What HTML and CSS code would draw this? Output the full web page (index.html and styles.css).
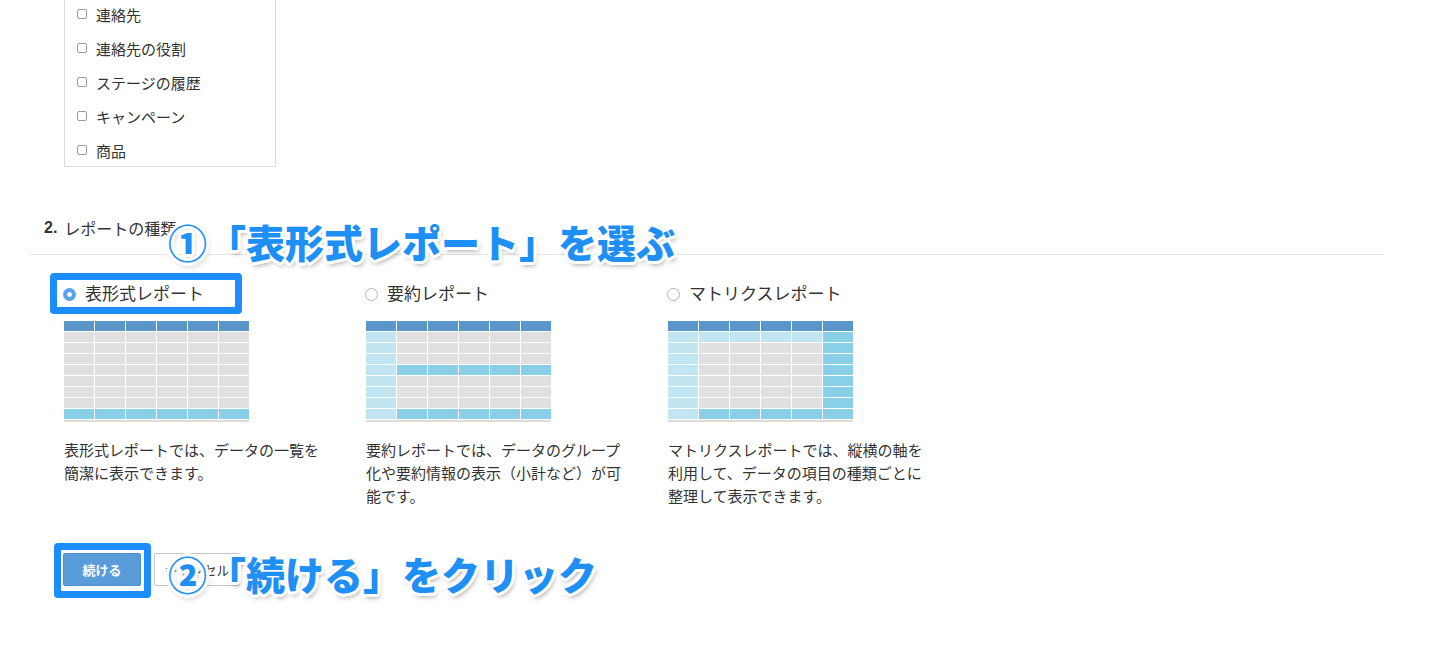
FILE: index.html
```html
<!DOCTYPE html>
<html lang="ja">
<head>
<meta charset="utf-8">
<title>レポートの種類</title>
<link rel="stylesheet" href="styles.css">
</head>
<body>
<div class="page">
  <div class="objects">
    <ul class="obj-list">
      <li class="obj-item"><span class="check"></span><span>連絡先</span></li>
      <li class="obj-item"><span class="check"></span><span>連絡先の役割</span></li>
      <li class="obj-item"><span class="check"></span><span>ステージの履歴</span></li>
      <li class="obj-item"><span class="check"></span><span>キャンペーン</span></li>
      <li class="obj-item"><span class="check"></span><span>商品</span></li>
    </ul>
  </div>

  <section class="types">
    <h2 class="types-title"><span class="num">2.</span><span>レポートの種類</span></h2>
    <div class="options">
      <div class="option">
        <div class="opt-label"><span class="radio on"></span><span>表形式レポート</span></div>
        <div class="mini">
          <i class="h"></i><i class="h"></i><i class="h"></i><i class="h"></i><i class="h"></i><i class="h"></i>
          <i class="g"></i><i class="g"></i><i class="g"></i><i class="g"></i><i class="g"></i><i class="g"></i>
          <i class="g"></i><i class="g"></i><i class="g"></i><i class="g"></i><i class="g"></i><i class="g"></i>
          <i class="g"></i><i class="g"></i><i class="g"></i><i class="g"></i><i class="g"></i><i class="g"></i>
          <i class="g"></i><i class="g"></i><i class="g"></i><i class="g"></i><i class="g"></i><i class="g"></i>
          <i class="g"></i><i class="g"></i><i class="g"></i><i class="g"></i><i class="g"></i><i class="g"></i>
          <i class="g"></i><i class="g"></i><i class="g"></i><i class="g"></i><i class="g"></i><i class="g"></i>
          <i class="g"></i><i class="g"></i><i class="g"></i><i class="g"></i><i class="g"></i><i class="g"></i>
          <i class="m"></i><i class="m"></i><i class="m"></i><i class="m"></i><i class="m"></i><i class="m"></i>
        </div>
        <p class="desc">表形式レポートでは、データの一覧を簡潔に表示できます。</p>
      </div>
      <div class="option">
        <div class="opt-label"><span class="radio"></span><span>要約レポート</span></div>
        <div class="mini">
          <i class="h"></i><i class="h"></i><i class="h"></i><i class="h"></i><i class="h"></i><i class="h"></i>
          <i class="l"></i><i class="g"></i><i class="g"></i><i class="g"></i><i class="g"></i><i class="g"></i>
          <i class="l"></i><i class="g"></i><i class="g"></i><i class="g"></i><i class="g"></i><i class="g"></i>
          <i class="l"></i><i class="g"></i><i class="g"></i><i class="g"></i><i class="g"></i><i class="g"></i>
          <i class="l"></i><i class="m"></i><i class="m"></i><i class="m"></i><i class="m"></i><i class="m"></i>
          <i class="l"></i><i class="g"></i><i class="g"></i><i class="g"></i><i class="g"></i><i class="g"></i>
          <i class="l"></i><i class="g"></i><i class="g"></i><i class="g"></i><i class="g"></i><i class="g"></i>
          <i class="l"></i><i class="g"></i><i class="g"></i><i class="g"></i><i class="g"></i><i class="g"></i>
          <i class="l"></i><i class="m"></i><i class="m"></i><i class="m"></i><i class="m"></i><i class="m"></i>
        </div>
        <p class="desc">要約レポートでは、データのグループ化や要約情報の表示（小計など）が可能です。</p>
      </div>
      <div class="option">
        <div class="opt-label"><span class="radio"></span><span>マトリクスレポート</span></div>
        <div class="mini">
          <i class="h"></i><i class="h"></i><i class="h"></i><i class="h"></i><i class="h"></i><i class="h"></i>
          <i class="l"></i><i class="l"></i><i class="l"></i><i class="l"></i><i class="l"></i><i class="m"></i>
          <i class="l"></i><i class="g"></i><i class="g"></i><i class="g"></i><i class="g"></i><i class="m"></i>
          <i class="l"></i><i class="g"></i><i class="g"></i><i class="g"></i><i class="g"></i><i class="m"></i>
          <i class="l"></i><i class="g"></i><i class="g"></i><i class="g"></i><i class="g"></i><i class="m"></i>
          <i class="l"></i><i class="g"></i><i class="g"></i><i class="g"></i><i class="g"></i><i class="m"></i>
          <i class="l"></i><i class="g"></i><i class="g"></i><i class="g"></i><i class="g"></i><i class="m"></i>
          <i class="l"></i><i class="g"></i><i class="g"></i><i class="g"></i><i class="g"></i><i class="m"></i>
          <i class="l"></i><i class="m"></i><i class="m"></i><i class="m"></i><i class="m"></i><i class="m"></i>
        </div>
        <p class="desc">マトリクスレポートでは、縦横の軸を利用して、データの項目の種類ごとに整理して表示できます。</p>
      </div>
    </div>
  </section>

  <div class="actions">
    <button class="btn btn-primary" type="button">続ける</button>
    <button class="btn btn-cancel" type="button">キャンセル</button>
  </div>
</div>

<div class="hl hl-1"></div>
<div class="hl hl-2"></div>
<div class="note note-1">①「表形式レポート」を選ぶ</div>
<div class="note note-2">②「続ける」をクリック</div>
</body>
</html>
```

FILE: styles.css
```css
html, body {
  margin: 0;
  padding: 0;
  background: #fff;
}

body {
  font-family: "Noto Sans CJK JP", "Noto Sans", sans-serif;
  color: #333;
  font-size: 15px;
  position: relative;
  width: 1434px;
  height: 659px;
  overflow: hidden;
}

.page {
  display: flex;
  flex-direction: column;
  align-items: flex-start;
}

/* object checkbox list */
.objects {
  margin-left: 64px;
  width: 212px;
  box-sizing: border-box;
  border: 1px solid #dcdcdc;
  border-top: none;
  padding: 5px 0 5px 12px;
}

.obj-list {
  list-style: none;
  margin: 0;
  padding: 0;
  display: flex;
  flex-direction: column;
  gap: 14px;
}

.obj-item {
  display: flex;
  align-items: center;
  gap: 9px;
  height: 20px;
  line-height: 20px;
  font-size: 15px;
}

.check {
  width: 10px;
  height: 10px;
  box-sizing: border-box;
  border: 1px solid #9c9c9c;
  border-radius: 2px;
  background: #fff;
  margin-top: -2px;
}

/* report types section */
.types {
  margin: 51px 0 0 30px;
  width: 1354px;
}

.types-title {
  margin: 0;
  height: 20px;
  box-sizing: content-box;
  display: flex;
  align-items: center;
  padding: 0 0 16px 14px;
  border-bottom: 1px solid #e4e4e4;
  font-size: 16px;
  line-height: 20px;
  font-weight: normal;
  color: #333;
}

.num {
  font-family: "Liberation Sans", Arial, sans-serif;
  font-weight: bold;
  font-size: 16px;
  line-height: 20px;
  margin-right: 7px;
  color: #333;
}

.options {
  display: flex;
  padding-left: 34px;
  margin-top: 26px;
}

.option {
  width: 302px;
  display: flex;
  flex-direction: column;
}

.opt-label {
  display: flex;
  align-items: center;
  gap: 9px;
  height: 24px;
  line-height: 24px;
  font-size: 17px;
  margin-left: -1px;
  color: #333;
}

.radio {
  width: 13px;
  height: 13px;
  box-sizing: border-box;
  border-radius: 50%;
  border: 1px solid #b4b4b4;
  background: #fff;
  margin-top: 3px;
  flex: none;
}

.radio.on {
  border: none;
  background: radial-gradient(circle, #fff 0 2px, #5aa2ef 2.6px);
}

/* mini table pictures */
.mini {
  margin-top: 16px;
  display: grid;
  grid-template-columns: repeat(6, 30px);
  grid-template-rows: repeat(9, 10px);
  gap: 1px;
  width: 185px;
  padding-bottom: 1px;
  border-bottom: 2px solid #dcdcdc;
}

.mini i {
  display: block;
}

.mini .h { background: #5a96c8; }
.mini .g { background: #e0e0e0; }
.mini .l { background: #c1e6f1; }
.mini .m { background: #88cfe7; }

.desc {
  margin: 16px 0 0;
  width: 262px;
  font-size: 15px;
  line-height: 23px;
  color: #333;
}

/* buttons */
.actions {
  display: flex;
  gap: 13px;
  margin: 46px 0 0 63px;
}

.btn {
  height: 33px;
  box-sizing: border-box;
  font-family: "Noto Sans CJK JP", sans-serif;
  font-size: 13px;
  line-height: 1;
  border-radius: 2px;
  padding: 0;
  cursor: pointer;
}

.btn-primary {
  width: 78px;
  background: #5a9bd9;
  border: 1px solid #4d8fd0;
  color: #fff;
  font-weight: bold;
}

.btn-cancel {
  width: 86px;
  background: #fff;
  border: 1px solid #c6c6c6;
  color: #333;
}

/* overlays: highlight frames and annotations */
.hl {
  position: absolute;
  box-sizing: border-box;
  border: 7px solid #1c8dff;
  border-radius: 4px;
  z-index: 2;
}

.hl-1 {
  left: 50px;
  top: 273px;
  width: 192px;
  height: 41px;
}

.hl-2 {
  left: 54px;
  top: 543px;
  width: 97px;
  height: 55px;
}

.note {
  position: absolute;
  z-index: 3;
  left: 168px;
  font-family: "Noto Sans CJK JP", sans-serif;
  font-weight: 900;
  font-size: 39px;
  line-height: 44px;
  color: #1e8ff5;
  white-space: nowrap;
  text-shadow:
    3px 0 0 #fff, -3px 0 0 #fff, 0 3px 0 #fff, 0 -3px 0 #fff,
    2px 2px 0 #fff, -2px -2px 0 #fff, 2px -2px 0 #fff, -2px 2px 0 #fff,
    3px 1px 0 #fff, -3px 1px 0 #fff, 1px 3px 0 #fff, 1px -3px 0 #fff,
    3px -1px 0 #fff, -3px -1px 0 #fff, -1px 3px 0 #fff, -1px -3px 0 #fff,
    2px 4px 5px rgba(0, 0, 0, 0.35);
}

.note-1 {
  top: 219px;
}

.note-2 {
  top: 551px;
}
```
